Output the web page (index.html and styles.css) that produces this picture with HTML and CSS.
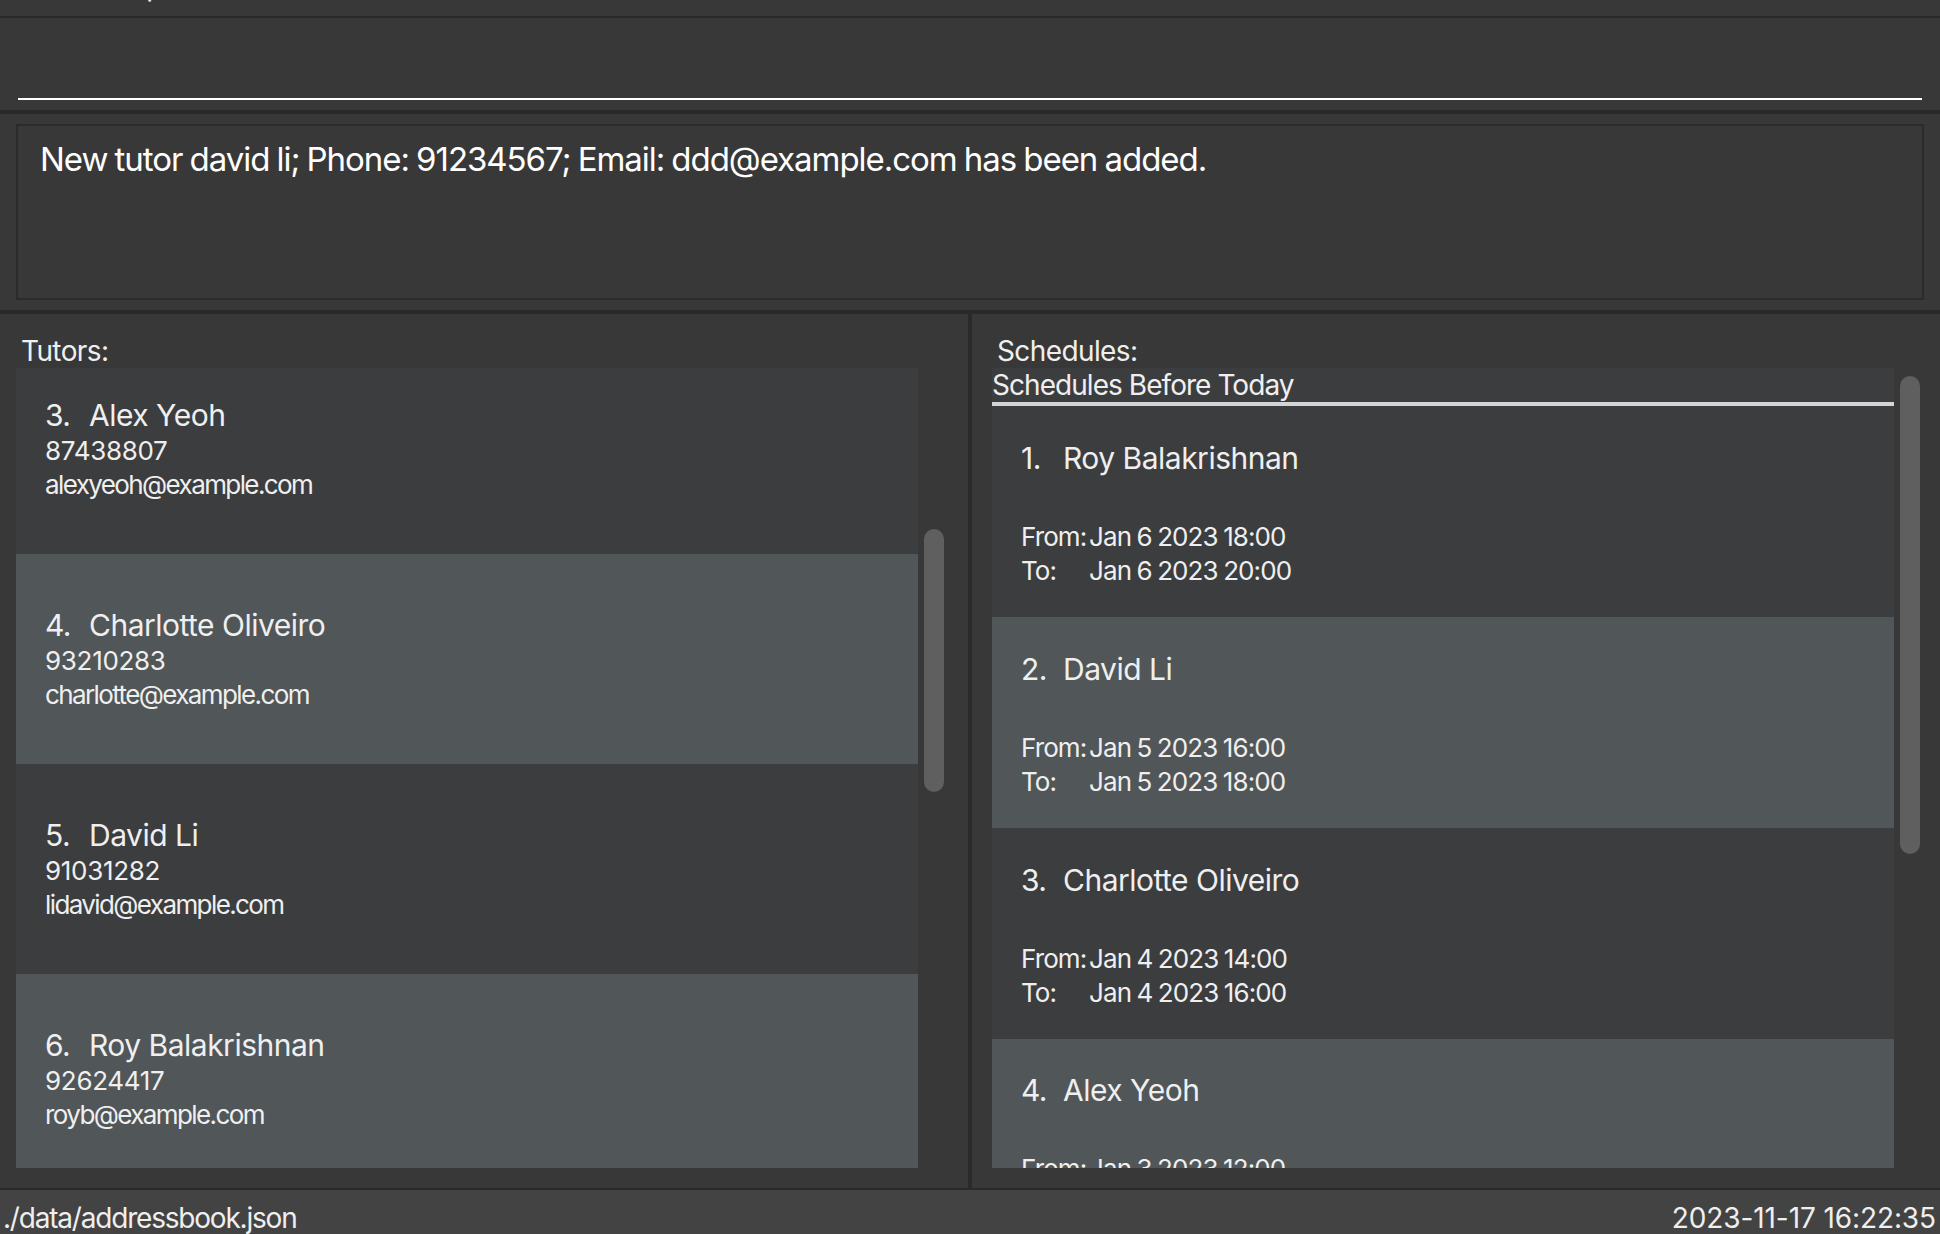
FILE: index.html
```html
<!DOCTYPE html>
<html lang="en">
<head>
<meta charset="utf-8">
<title>Tutor Address Book</title>
<link rel="stylesheet" href="styles.css">
</head>
<body>
<div class="app">
  <div class="menubar">
    <div class="menu-inner">
      <span class="menu-item">File</span>
      <span class="menu-item">Help</span>
    </div>
  </div>
  <div class="sep"></div>
  <div class="command">
    <div class="command-input"></div>
  </div>
  <div class="sep thick"></div>
  <div class="result">
    <div class="result-box">New tutor david li; Phone: 91234567; Email: ddd@example.com has been added.</div>
  </div>
  <div class="sep thick"></div>
  <div class="lists">
    <section class="panel panel-left">
      <div class="panel-label">Tutors:</div>
      <div class="list-wrap">
        <div class="list">
          <div class="list-inner scrolled">
            <div class="card even">
              <div class="name-row"><span class="idx">3.</span><span class="nm">Alex Yeoh</span></div>
              <div class="detail phone">87438807</div>
              <div class="detail email">alexyeoh@example.com</div>
            </div>
            <div class="card odd">
              <div class="name-row"><span class="idx">4.</span><span class="nm">Charlotte Oliveiro</span></div>
              <div class="detail phone">93210283</div>
              <div class="detail email">charlotte@example.com</div>
            </div>
            <div class="card even">
              <div class="name-row"><span class="idx">5.</span><span class="nm">David Li</span></div>
              <div class="detail phone">91031282</div>
              <div class="detail email">lidavid@example.com</div>
            </div>
            <div class="card odd">
              <div class="name-row"><span class="idx">6.</span><span class="nm">Roy Balakrishnan</span></div>
              <div class="detail phone">92624417</div>
              <div class="detail email">royb@example.com</div>
            </div>
          </div>
        </div>
        <div class="track"><div class="thumb" style="margin-top:161px;height:263px"></div></div>
      </div>
    </section>
    <div class="vdiv"></div>
    <section class="panel panel-right">
      <div class="panel-label">Schedules:</div>
      <div class="list-wrap">
        <div class="list">
          <div class="list-inner">
            <div class="sched-header">Schedules Before Today</div>
            <div class="card sched even">
              <div class="name-row"><span class="idx">1.</span><span class="nm">Roy Balakrishnan</span></div>
              <div class="times">
                <span class="tl">From:</span><span>Jan 6 2023 18:00</span>
                <span class="tl">To:</span><span>Jan 6 2023 20:00</span>
              </div>
            </div>
            <div class="card sched odd">
              <div class="name-row"><span class="idx">2.</span><span class="nm">David Li</span></div>
              <div class="times">
                <span class="tl">From:</span><span>Jan 5 2023 16:00</span>
                <span class="tl">To:</span><span>Jan 5 2023 18:00</span>
              </div>
            </div>
            <div class="card sched even">
              <div class="name-row"><span class="idx">3.</span><span class="nm">Charlotte Oliveiro</span></div>
              <div class="times">
                <span class="tl">From:</span><span>Jan 4 2023 14:00</span>
                <span class="tl">To:</span><span>Jan 4 2023 16:00</span>
              </div>
            </div>
            <div class="card sched odd">
              <div class="name-row"><span class="idx">4.</span><span class="nm">Alex Yeoh</span></div>
              <div class="times">
                <span class="tl">From:</span><span>Jan 3 2023 12:00</span>
                <span class="tl">To:</span><span>Jan 3 2023 14:00</span>
              </div>
            </div>
          </div>
        </div>
        <div class="track"><div class="thumb" style="margin-top:8px;height:478px"></div></div>
      </div>
    </section>
  </div>
  <div class="sep"></div>
  <div class="status">
    <span class="status-left">./data/addressbook.json</span>
    <span class="status-right">2023-11-17 16:22:35</span>
  </div>
</div>
</body>
</html>
```

FILE: styles.css
```css
* { box-sizing: border-box; }
html, body {
  margin: 0;
  padding: 0;
  background: #383838;
}
body {
  font-family: Inter, "Open Sans", sans-serif;
  color: #efefef;
  overflow: hidden;
}
.app {
  width: 1940px;
  height: 1234px;
  display: flex;
  flex-direction: column;
  background: #383838;
}
.menubar {
  height: 16px;
  overflow: hidden;
  flex: none;
}
.menu-inner {
  display: flex;
  gap: 46px;
  padding-left: 10px;
  margin-top: -31px;
  font-size: 28px;
  line-height: 34px;
  color: #ffffff;
}
.sep {
  height: 2px;
  flex: none;
  background: #2a2a2a;
}
.sep.thick { height: 4px; }
.command {
  height: 92px;
  flex: none;
  padding: 0 18px;
}
.command-input {
  height: 82px;
  border-bottom: 2px solid #ffffff;
}
.result {
  height: 196px;
  flex: none;
  padding: 10px 16px;
}
.result-box {
  height: 176px;
  border: 2px solid #2b2b2b;
  padding: 13px 22px;
  font-size: 33px;
  line-height: 40px;
  color: #ffffff;
  letter-spacing: -1.05px;
  word-spacing: -1px;
}
.lists {
  height: 874px;
  flex: none;
  display: flex;
}
.panel {
  width: 968px;
  display: flex;
  flex-direction: column;
}
.panel-left { padding: 0 24px 0 16px; }
.panel-right { padding: 0 20px 0 20px; }
.vdiv {
  width: 4px;
  flex: none;
  background: #2a2a2a;
}
.panel-label {
  padding: 21px 0 0 5px;
  font-size: 28px;
  line-height: 33px;
  height: 54px;
  letter-spacing: -0.6px;
}
.list-wrap {
  display: flex;
  gap: 6px;
  height: 800px;
}
.list {
  width: 902px;
  height: 800px;
  overflow: hidden;
  flex: none;
}
.list-inner.scrolled { margin-top: -24px; }
.track {
  width: 20px;
  flex: none;
}
.thumb {
  width: 20px;
  background: #5f5f5f;
  border-radius: 10px;
}
.card {
  height: 210px;
  padding-left: 29px;
  display: flex;
  flex-direction: column;
  justify-content: center;
}
.card.even { background: #3c3d3f; }
.card.odd { background: #515658; }
.card.sched { height: 211px; padding-top: 3px; }
.card.sched:last-child { height: 210px; }
.name-row {
  font-size: 30px;
  line-height: 38px;
  display: flex;
  letter-spacing: -0.5px;
}
.idx { width: 44px; flex: none; }
.sched .idx { width: 42px; }
.detail {
  font-size: 26px;
  line-height: 34px;
}
.detail.phone { letter-spacing: -0.3px; }
.detail.email { letter-spacing: -1.6px; }
.sched-header {
  height: 38px;
  background: #3c3d3f;
  border-bottom: 4px solid #d4d6d4;
  font-size: 28px;
  line-height: 34px;
  padding-left: 0;
  letter-spacing: -0.95px;
}
.times {
  margin-top: 43px;
  display: grid;
  grid-template-columns: 68px auto;
  justify-content: start;
  font-size: 26px;
  line-height: 34px;
  letter-spacing: -0.9px;
  word-spacing: -1px;
}
.status {
  height: 44px;
  flex: none;
  background: #434343;
  display: flex;
  justify-content: space-between;
  padding: 6px 4px 0 3px;
  font-size: 28px;
  line-height: 44px;
  overflow: hidden;
}
.status-left { letter-spacing: -1.2px; }
.status-right { letter-spacing: -0.1px; }
```
